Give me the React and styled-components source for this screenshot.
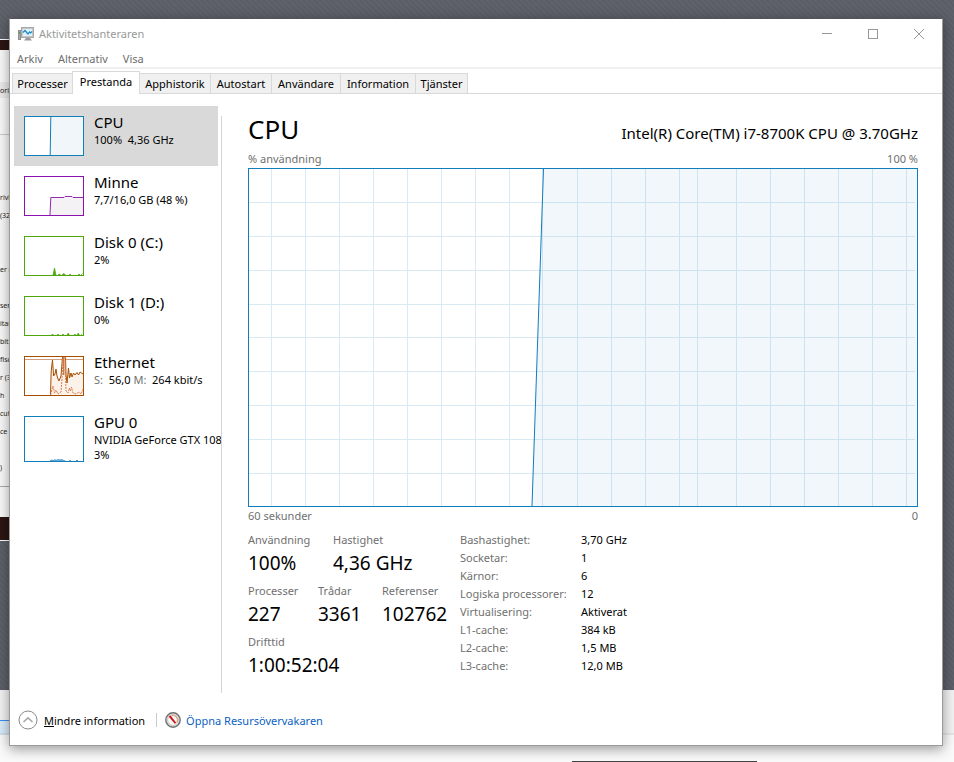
import React, { useState } from 'react'
import styled, { createGlobalStyle } from 'styled-components';

const GlobalStyle = createGlobalStyle`
    * {
        box-sizing: border-box;
    }
    body {
        margin: 0;
        font-family: "Noto Sans", "Open Sans", sans-serif;
        font-size: 11px;
        color: #000;
    }
    button {
        font: inherit;
        color: inherit;
        background: none;
        border: 0;
        padding: 0;
    }
`

/* desktop */
const Desktop = styled.div`
    position: relative;
    min-height: 100vh;
    padding: 18px 11px 16px 9px;
    overflow: hidden;
    background: repeating-linear-gradient(45deg, #5b5e66 0 2px, #5f626a 2px 4px);
`
const BackWindow = styled.div`
    position: absolute;
    top: 39px;
    left: 0;
    width: 40px;
    border-top: 1px solid #fff;
    border-bottom: 1px solid #fff;
    background: #fafafa;
    font-size: 7px;
    color: #222;
`
const BackStrip = styled.div`
    height: ${props => props.$height}px;
    background: #2b1512;
`
const BackTabs = styled.div`
    margin-top: 32px;
    height: 16px;
    line-height: 18px;
    background: #ececec;
    white-space: nowrap;
`
const BackRows = styled.div`
    margin-top: 36px;
    padding-top: 54px;
    height: 353px;
    border-top: 1px solid #ccc;
    border-bottom: 1px solid #aaa;
`
const BackRow = styled.div`
    height: 18px;
    line-height: 18px;
    white-space: pre;
`
const BackFooter = styled.div`
    height: 30px;
`
const BottomBar = styled.div`
    position: absolute;
    left: 0;
    right: 0;
    bottom: 0;
    height: 72px;
    background: #fafafa;
`
const BottomBarTop = styled.div`
    height: 45px;
    background: #f3f3f3;
    border-bottom: 2px solid #e6e6e6;
`
const BottomBarSelection = styled.div`
    position: absolute;
    top: 30px;
    left: 0;
    width: 40px;
    height: 15px;
    background: #d9ebf9;
    border-top: 1px solid #3b8eea;
    border-bottom: 2px solid #cde0ec;
`
const BottomPill = styled.div`
    position: absolute;
    left: 60%;
    bottom: 0;
    width: 185px;
    height: 1px;
    background: #444;
`

/* task manager window */
const Window = styled.div`
    position: relative;
    display: flex;
    flex-direction: column;
    min-height: calc(100vh - 34px);
    border: 1px solid #9a9a9a;
    border-top-color: #53555c;
    background: #fff;
    box-shadow: 0 3px 12px 0 rgba(0, 0, 0, .4);
`
const TitleBar = styled.header`
    display: flex;
    align-items: center;
    height: 30px;
    padding-left: 8px;
    color: #999;
`
const TitleText = styled.span`
    flex: 1;
    margin-left: 5px;
    padding-bottom: 2px;
`
const WindowButton = styled.button`
    display: flex;
    align-items: center;
    justify-content: center;
    width: 46px;
    height: 28px;
`
const MenuBar = styled.nav`
    display: flex;
    gap: 15px;
    height: 20px;
    padding: 1px 0 0 7px;
    border-bottom: 2px solid #f0f0f0;
    color: #6d6d6d;
    line-height: 18px;
`
const TabBar = styled.div`
    display: flex;
    align-items: flex-end;
    height: 25px;
    padding-left: 3px;
    border-bottom: 1px solid #d9d9d9;
`
const Tab = styled.button`
    position: relative;
    z-index: ${props => props.$active ? 1 : 0};
    width: ${props => props.$width}px;
    height: ${props => props.$active ? 23 : 20}px;
    margin: 0 0 ${props => props.$active ? -1 : 0}px -1px;
    padding-bottom: ${props => props.$active ? 3 : 0}px;
    border: 1px solid #d9d9d9;
    border-bottom: 0;
    background: ${props => props.$active ? '#fff' : '#f0f0f0'};
    white-space: nowrap;
`
const Body = styled.div`
    display: flex;
    flex: 1;
`
const Sidebar = styled.aside`
    flex: none;
    width: 211px;
    padding: 12px 0 0 4px;
    overflow: hidden;
`
const Divider = styled.div`
    flex: none;
    width: 1px;
    margin-top: 22px;
    background: #d4d4d4;
`
const Resource = styled.button`
    display: flex;
    align-items: flex-start;
    gap: 10px;
    width: 204px;
    min-height: 60px;
    padding: 6px 0 0 10px;
    text-align: left;
    white-space: nowrap;
    background: ${props => props.$active ? '#d9d9d9' : 'transparent'};
`
const Thumb = styled.svg`
    flex: none;
    width: 60px;
    height: ${props => props.$height || 40}px;
    margin-top: 4px;
    border: 1px solid ${props => props.$color};
    background: #fff;
`
const ResourceText = styled.span`
    display: flex;
    flex-direction: column;
    line-height: 15px;
    white-space: pre;
`
const ResourceName = styled.span`
    font-size: 15px;
    line-height: 20px;
`
const Muted = styled.span`
    color: #707070;
`

const Main = styled.main`
    flex: 1;
    min-width: 0;
    padding: 17px 24px 0 26px;
`
const MainHeader = styled.div`
    display: flex;
    align-items: baseline;
    justify-content: space-between;
    height: 39px;
`
const Title = styled.h1`
    margin: 0;
    font-size: 26px;
    font-weight: 400;
    line-height: 36px;
`
const Model = styled.span`
    font-size: 15px;
`
const Caption = styled.div`
    display: flex;
    justify-content: space-between;
    line-height: 18px;
    color: #707070;
`
const Graph = styled.svg`
    display: block;
    width: 100%;
    height: 339px;
    border: 1px solid #117dbb;
    background: #fff;
`
const Details = styled.div`
    display: flex;
    margin-top: 6px;
`
const Stats = styled.div`
    display: flex;
    flex-direction: column;
    gap: 5px;
    width: 212px;
`
const StatRow = styled.div`
    display: grid;
    grid-template-columns: ${props => props.$columns};
`
const StatLabel = styled.div`
    line-height: 18px;
    color: #707070;
`
const StatValue = styled.div`
    font-size: 19px;
    line-height: 28px;
    white-space: nowrap;
`
const Specs = styled.table`
    align-self: flex-start;
    border-collapse: collapse;
    th, td {
        height: 18px;
        padding: 0;
        font-weight: 400;
        line-height: 18px;
        text-align: left;
    }
    th {
        width: 121px;
        color: #707070;
    }
`

const Footer = styled.footer`
    display: flex;
    align-items: center;
    height: 52px;
    padding: 2px 8px 0;
`
const LessButton = styled.button`
    display: flex;
    align-items: center;
    gap: 6px;
`
const FooterLine = styled.div`
    width: 1px;
    height: 14px;
    margin: 0 8px 0 11px;
    background: #ccc;
`
const MonitorLink = styled.a`
    display: flex;
    align-items: center;
    gap: 5px;
    color: #0a5fc4;
    text-decoration: none;
`

const backRows = ['rivl', '(32', '', '', 'er (', '', 'sen', 'itan', 'bitz', 'fisc', 'r (3', 'h', 'cut', 'ce (', '', ')']

const tabs = [
    { name: 'Processer', width: 61 },
    { name: 'Prestanda', width: 68 },
    { name: 'Apphistorik', width: 72 },
    { name: 'Autostart', width: 62 },
    { name: 'Användare', width: 70 },
    { name: 'Information', width: 76 },
    { name: 'Tjänster', width: 53 },
]

const specs = [
    ['Bashastighet:', '3,70 GHz'],
    ['Socketar:', '1'],
    ['Kärnor:', '6'],
    ['Logiska processorer:', '12'],
    ['Virtualisering:', 'Aktiverat'],
    ['L1-cache:', '384 kB'],
    ['L2-cache:', '1,5 MB'],
    ['L3-cache:', '12,0 MB'],
]

const gridX = [22, 56, 90, 124, 158, 192, 226, 260, 293, 328, 362, 396, 430, 448, 487, 521, 555, 589, 623, 657]
const gridY = [33, 67, 101, 135, 168, 202, 236, 270, 304]

const resources = [
    {
        name: 'CPU', detail: '100%  4,36 GHz', color: '#117dbb',
        chart: <>
            <path d="M25 38 L26 0 H58 V38 Z" fill="#f1f6fa" />
            <path d="M25.2 38 L25.8 0" stroke="#117dbb" fill="none" />
        </>
    },
    {
        name: 'Minne', detail: '7,7/16,0 GB (48 %)', color: '#8b12ae',
        chart: <>
            <path d="M25 38 L26 20.5 H58 V38 Z" fill="#f4f2f4" />
            <path d="M25 38 L25.8 20.5 H39 L40 19.5 H47 L48 20.5 H58" stroke="#9528b4" fill="none" />
        </>
    },
    {
        name: 'Disk 0 (C:)', detail: '2%', color: '#4da60c',
        chart: <path d="M28 38 L29.5 31 L31 38 Z M33 38 l1.5 -1 l1 1 M37 38 l2 -1.5 l1.5 1.5 M44 38 l1 -1 l1 1 M53 38 l1 -1 l1 1 M56 38 l1.5 -1.5" fill="#4da60c" stroke="#4da60c" strokeWidth=".7" />
    },
    {
        name: 'Disk 1 (D:)', detail: '0%', color: '#4da60c',
        chart: <path d="M26.5 38 l1 -1 l1 1 M32 38 l1 -1 l1 1 M37 38 l1 -1 l1 1 M42 38 l1.2 -2 l1.2 2 M49 38 l1 -1 l1 1 M52 38 l1.2 -2 l1.2 2 M56 38 l1 -1" fill="#4da60c" stroke="#4da60c" strokeWidth=".6" />
    },
    {
        name: 'Ethernet', detail: <><Muted>S: </Muted> 56,0 <Muted>M: </Muted> 264 kbit/s</>, color: '#a74f01',
        chart: <>
            <path d="M0 2.5 H58" stroke="#cf9f80" fill="none" />
            <path d="M25 38 L26 12 L27.5 3 L29 18 L31 14 L33 22 L36 20 L38 0 H41 L42 24 L43.5 11 L46 20 L50 16 L54 17 L58 16 V38 Z" fill="#fbf2ea" />
            <path d="M25.5 38 L26.2 14 L27.5 3 L28.6 19 L30 17 L31 12 L32 19 L33 22 L34 24 L36 19 L37.5 0 M38.8 0 V18 M40.5 0 L41 18 L42 26 L43.5 11 L44.5 21 L46 16 L47 20 L48.5 16 L50 18 L52 15.5 L53.5 18 L55 15 L58 17" stroke="#a74f01" fill="none" />
            <path d="M25.5 38 L28 29 L29.5 36 L31 33 L33 37 L36 35 L37 22 L38 0 M40 0 L41 34 L43 36 L44.5 31 L45.5 34 L46.5 30 L48 36 L51 37 L54 35 L56 37 L58 32" stroke="#e07a4a" strokeDasharray="2 1" fill="none" />
        </>
    },
    {
        name: 'GPU 0', detail: <>NVIDIA GeForce GTX 1080<br />3%</>, color: '#117dbb', height: 46,
        chart: <path d="M25 44 l1.5 -1 l2 .6 l1 -.8 l2 .4 l2 -.8 l1.5 .6 l2 -.4 l1.5 .8 l2 .6 M44 44 l1 -.6 l1 .6 M51 44 l1 -1 l1 1" stroke="#117dbb" fill="#7fb8dc" strokeWidth=".7" />
    },
]

function AppIcon() {
    return (
        <svg width="16" height="16" viewBox="0 0 16 16" aria-hidden="true">
            <rect x="0.5" y="4.5" width="2" height="9" fill="#a9a9a9" stroke="#8e8e8e" />
            <rect x="1" y="6" width="1" height="2" fill="#4fae4a" />
            <path d="M6 14.5 H14 L12 12 H8 Z" fill="#9a9a9a" />
            <rect x="3.5" y="1.5" width="12" height="10" fill="#c4c6c8" stroke="#a5a7a9" />
            <rect x="5" y="3" width="9" height="7" fill="#dff2fc" />
            <path d="M5 6.5 L7 4.5 L10 8 L11.5 6 L12.5 7 L14 5.5" stroke="#1788c7" strokeWidth="1.2" fill="none" />
        </svg>
    )
}

function GaugeIcon() {
    return (
        <svg width="16" height="16" viewBox="0 0 16 16" aria-hidden="true">
            <circle cx="8" cy="8" r="7.2" fill="#e4e4e4" stroke="#707070" strokeWidth="1.4" />
            <circle cx="8" cy="8" r="5.4" fill="#faf8f4" stroke="#bdbdbd" strokeWidth=".8" />
            <path d="M6.5 3.8 A4.4 4.4 0 0 1 11.6 10.5" stroke="#d9a27b" strokeWidth="1.1" fill="none" />
            <path d="M3.6 4.6 L5.6 3.6 L11.2 10.8 L9.8 11.8 Z" fill="#c8141c" />
        </svg>
    )
}

function CpuGraph() {
    return (
        <Graph viewBox="0 0 668 337" preserveAspectRatio="none" role="img" aria-label="% användning">
            <g stroke="#d9eaf4" shapeRendering="crispEdges">
                {gridX.map(x => <line key={x} x1={x + .5} x2={x + .5} y1="0" y2="337" />)}
                {gridY.map(y => <line key={y} x1="0" x2="666" y1={y + .5} y2={y + .5} />)}
            </g>
            <path d="M283 337 L294.5 0 H668 V337 Z" fill="#117dbb" fillOpacity=".06" />
            <path d="M283 337 L294.5 0" stroke="#117dbb" fill="none" />
        </Graph>
    )
}

function Stat({ label, value }) {
    return (
        <div>
            <StatLabel>{label}</StatLabel>
            <StatValue>{value}</StatValue>
        </div>
    )
}

function App() {
    const [tab, setTab] = useState('Prestanda')
    const [resource, setResource] = useState('CPU')

    return (
        <Desktop>
            <GlobalStyle />
            <BackWindow aria-hidden="true">
                <BackStrip $height={10} />
                <BackTabs>orik</BackTabs>
                <BackRows>
                    {backRows.map((text, i) => <BackRow key={i}>{text}</BackRow>)}
                </BackRows>
                <BackFooter />
                <BackStrip $height={23} />
            </BackWindow>
            <BottomBar>
                <BottomBarTop />
                <BottomBarSelection />
                <BottomPill />
            </BottomBar>
            <Window>
                <TitleBar>
                    <AppIcon />
                    <TitleText>Aktivitetshanteraren</TitleText>
                    <WindowButton aria-label="Minimera">
                        <svg width="10" height="10"><path d="M0 4.5 H10" stroke="#999" /></svg>
                    </WindowButton>
                    <WindowButton aria-label="Maximera">
                        <svg width="10" height="10"><rect x=".5" y=".5" width="9" height="9" fill="none" stroke="#999" /></svg>
                    </WindowButton>
                    <WindowButton aria-label="Stäng">
                        <svg width="10" height="10"><path d="M0 0 L10 10 M10 0 L0 10" stroke="#999" /></svg>
                    </WindowButton>
                </TitleBar>
                <MenuBar>
                    <button>Arkiv</button>
                    <button>Alternativ</button>
                    <button>Visa</button>
                </MenuBar>
                <TabBar role="tablist">
                    {tabs.map(t => (
                        <Tab
                            key={t.name}
                            role="tab"
                            aria-selected={t.name === tab}
                            $active={t.name === tab}
                            $width={t.width}
                            onClick={() => setTab(t.name)}
                        >
                            {t.name}
                        </Tab>
                    ))}
                </TabBar>
                <Body>
                    <Sidebar>
                        {resources.map(r => (
                            <Resource key={r.name} $active={r.name === resource} onClick={() => setResource(r.name)}>
                                <Thumb $color={r.color} $height={r.height} viewBox={`0 0 58 ${(r.height || 40) - 2}`}>
                                    {r.chart}
                                </Thumb>
                                <ResourceText>
                                    <ResourceName>{r.name}</ResourceName>
                                    <span>{r.detail}</span>
                                </ResourceText>
                            </Resource>
                        ))}
                    </Sidebar>
                    <Divider />
                    <Main>
                        <MainHeader>
                            <Title>CPU</Title>
                            <Model>Intel(R) Core(TM) i7-8700K CPU @ 3.70GHz</Model>
                        </MainHeader>
                        <Caption>
                            <span>% användning</span>
                            <span>100 %</span>
                        </Caption>
                        <CpuGraph />
                        <Caption>
                            <span>60 sekunder</span>
                            <span>0</span>
                        </Caption>
                        <Details>
                            <Stats>
                                <StatRow $columns="85px 1fr">
                                    <Stat label="Användning" value="100%" />
                                    <Stat label="Hastighet" value="4,36 GHz" />
                                </StatRow>
                                <StatRow $columns="70px 64px 1fr">
                                    <Stat label="Processer" value="227" />
                                    <Stat label="Trådar" value="3361" />
                                    <Stat label="Referenser" value="102762" />
                                </StatRow>
                                <StatRow $columns="1fr">
                                    <Stat label="Drifttid" value="1:00:52:04" />
                                </StatRow>
                            </Stats>
                            <Specs>
                                <tbody>
                                    {specs.map(([label, value]) => (
                                        <tr key={label}>
                                            <th scope="row">{label}</th>
                                            <td>{value}</td>
                                        </tr>
                                    ))}
                                </tbody>
                            </Specs>
                        </Details>
                    </Main>
                </Body>
                <Footer>
                    <LessButton>
                        <svg width="20" height="20" viewBox="0 0 20 20" aria-hidden="true">
                            <circle cx="10" cy="10" r="9" fill="#fff" stroke="#8a8a8a" />
                            <path d="M5.5 12 L10 7.8 L14.5 12" fill="none" stroke="#a8a8a8" strokeWidth="1.6" />
                        </svg>
                        <span><u>M</u>indre information</span>
                    </LessButton>
                    <FooterLine />
                    <MonitorLink href="#resursovervakaren">
                        <GaugeIcon />
                        Öppna Resursövervakaren
                    </MonitorLink>
                </Footer>
            </Window>
        </Desktop>
    )
}

export default App
